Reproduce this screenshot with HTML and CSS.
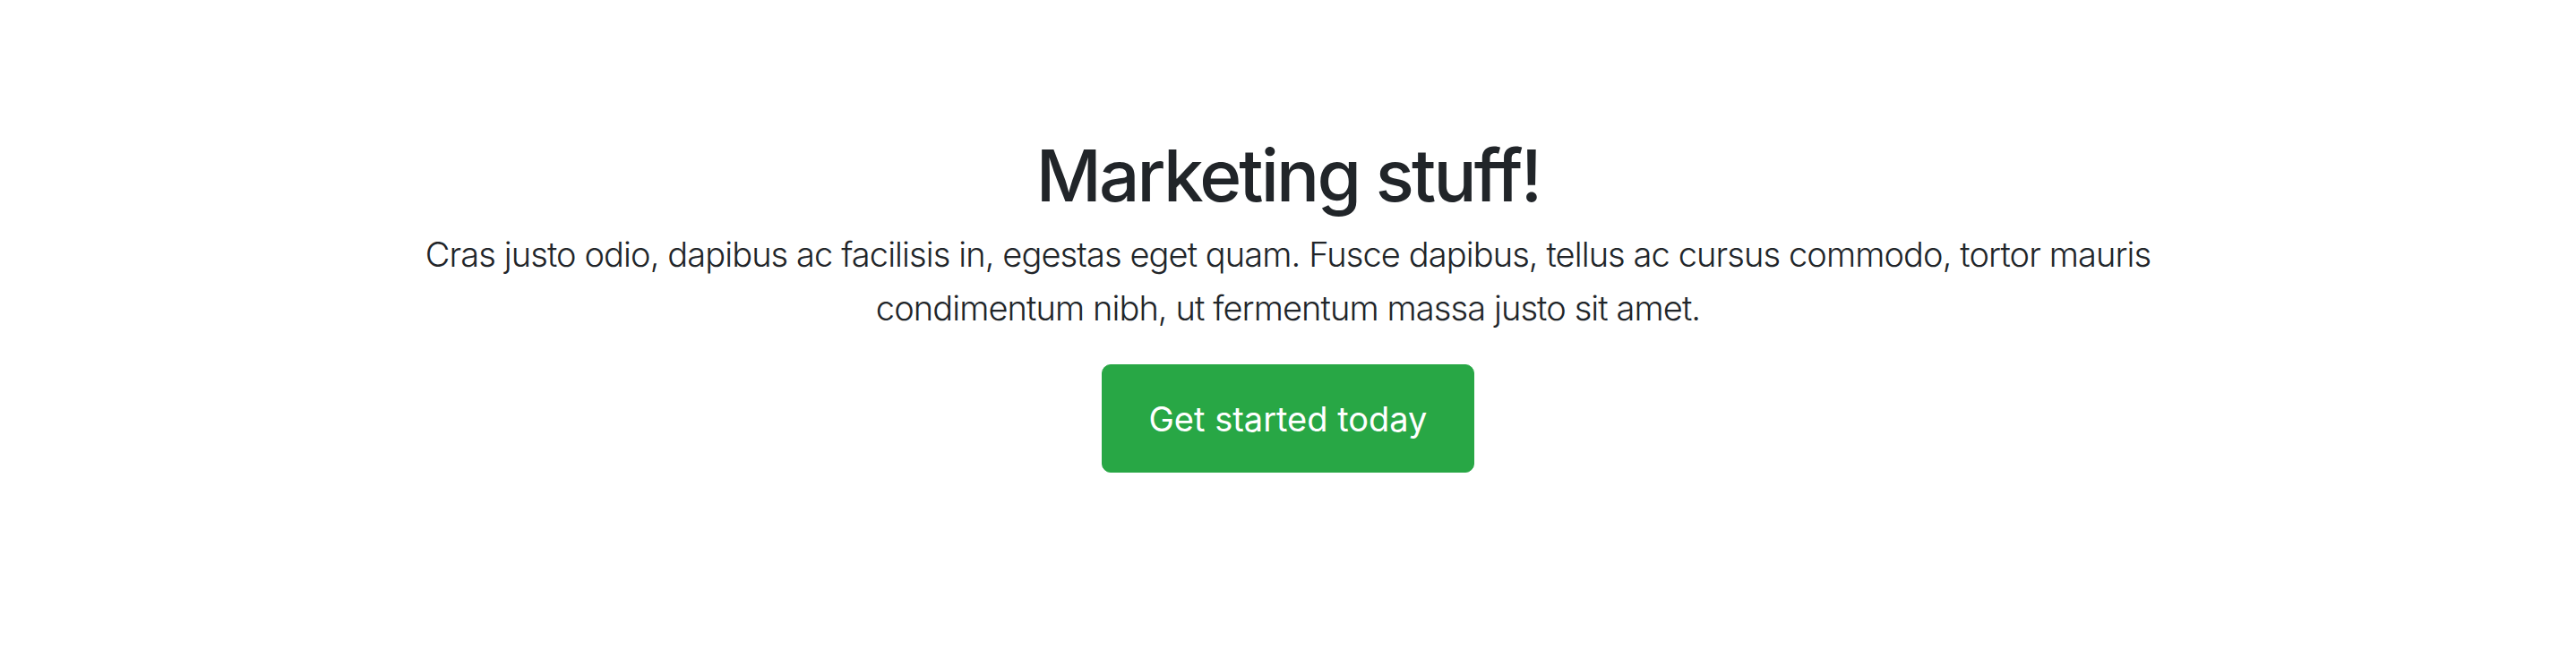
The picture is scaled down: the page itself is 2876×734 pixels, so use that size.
FILE: index.html
```html
<!DOCTYPE html>
<html lang="en">
<head>
<meta charset="utf-8">
<title>Marketing stuff!</title>
<link rel="stylesheet" href="styles.css">
</head>
<body>
<main class="hero">
  <h1 class="hero-title">Marketing stuff!</h1>
  <p class="hero-lead">Cras justo odio, dapibus ac facilisis in, egestas eget quam. Fusce dapibus, tellus ac cursus commodo, tortor mauris condimentum nibh, ut fermentum massa justo sit amet.</p>
  <a class="btn-success" href="#">Get started today</a>
</main>
</body>
</html>
```
FILE: styles.css
```css
html, body {
  margin: 0;
  padding: 0;
  background: #fff;
}
body {
  font-family: Inter, "Noto Sans", sans-serif;
  color: #212529;
}
.hero {
  display: flex;
  flex-direction: column;
  align-items: center;
  text-align: center;
  padding-top: 148px;
}
.hero-title {
  margin: 0;
  font-size: 80px;
  font-weight: 500;
  line-height: 96px;
  letter-spacing: -2.8px;
  font-variant-ligatures: none;
}
.hero-lead {
  margin: 10px 0 0;
  max-width: 2000px;
  font-size: 38px;
  font-weight: 300;
  line-height: 60px;
  letter-spacing: -0.9px;
}
.btn-success {
  margin-top: 33px;
  display: inline-block;
  box-sizing: border-box;
  padding: 30px 52px 29px;
  border: 1px solid #28a745;
  border-radius: 10px;
  background: #28a745;
  color: #fff;
  font-size: 38px;
  line-height: 60px;
  font-weight: 400;
  text-decoration: none;
}
```
